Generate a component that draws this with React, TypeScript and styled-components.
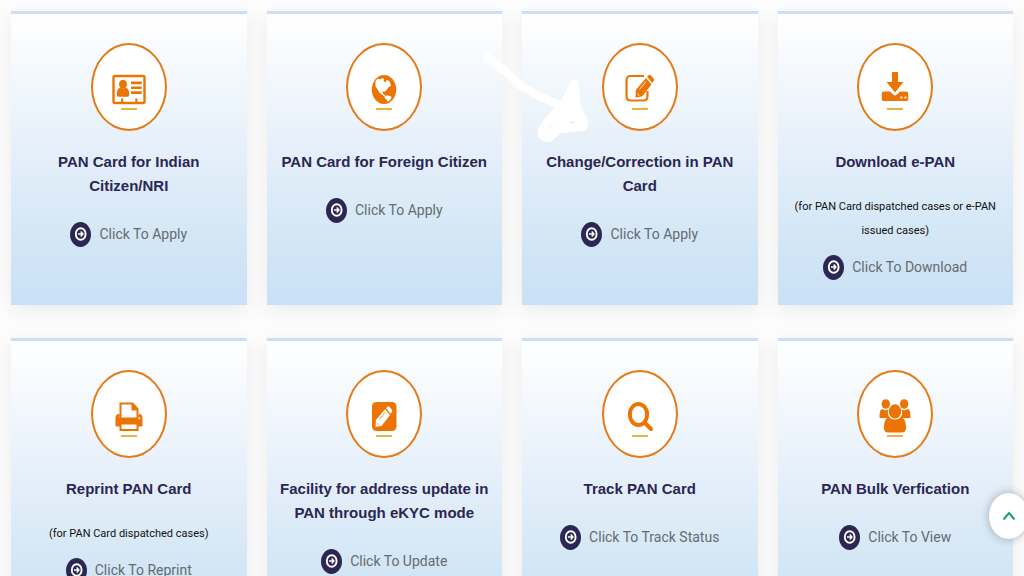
import React from "react";
import styled, { createGlobalStyle } from "styled-components";

const GlobalStyle = createGlobalStyle`
  *, *::before, *::after { box-sizing: border-box; }
  body {
    margin: 0;
    background: #fdfdfd;
    font-family: Roboto, "Liberation Sans", sans-serif;
  }
`;

const Services = styled.main`
  display: grid;
  grid-template-columns: repeat(4, minmax(0, 1fr));
  gap: 33px 20px;
  padding: 11px 11px 33px;
`;

const Card = styled.article`
  position: relative;
  display: flex;
  flex-direction: column;
  align-items: center;
  min-height: 294px;
  padding: 29px 10px 25px;
  border-top: 3px solid #cce0f4;
  background: linear-gradient(180deg, #ffffff 0%, #e6f0fa 45%, #d3e6f5 78%, #c9e0f6 100%);
  box-shadow: 0 5px 20px rgba(0, 0, 0, 0.08);
  text-align: center;
`;

const Badge = styled.div`
  display: flex;
  align-items: center;
  justify-content: center;
  width: 76px;
  height: 88px;
  padding-top: 6px;
  border: 2px solid #e47a18;
  border-radius: 50%;
  background: #ffffff;
`;

const Title = styled.h2`
  margin: 19px 0 0;
  color: #2c2652;
  font-family: "Liberation Sans", Arial, sans-serif;
  font-size: 15px;
  font-weight: 700;
  line-height: 24px;
`;

const Note = styled.p`
  margin: 21px 0 0;
  color: #111111;
  font-size: 11px;
  line-height: 24px;
`;

const ActionLink = styled.a<{ $afterNote?: boolean }>`
  display: inline-flex;
  align-items: center;
  gap: 8px;
  margin-top: ${({ $afterNote }) => ($afterNote ? 12 : 24)}px;
  color: #666b6f;
  font-size: 14px;
  line-height: 25px;
  text-decoration: none;
`;

const ScrollTop = styled.button`
  position: fixed;
  right: -4px;
  bottom: 37px;
  display: flex;
  align-items: center;
  justify-content: center;
  width: 39px;
  height: 46px;
  padding: 0;
  border: 0;
  border-radius: 50%;
  background: #ffffff;
  box-shadow: 0 0 10px rgba(0, 0, 0, 0.3);
  cursor: pointer;
`;

const Scribble = styled.svg`
  position: absolute;
  z-index: 1;
  top: 34px;
  left: -42px;
  pointer-events: none;
`;

const ORANGE = "#ec7404";

function Glyph({ children }: { children: React.ReactNode }) {
  return (
    <svg width="40" height="48" viewBox="0 0 40 48" fill={ORANGE} aria-hidden="true">
      {children}
      <rect x="12" y="42" width="16" height="2" fill="#eeb040" />
    </svg>
  );
}

const IdCardGlyph = () => (
  <Glyph>
    <rect x="4.500" y="10" width="31" height="27" rx="1.500" fill="none" stroke={ORANGE} strokeWidth="2.400" />
    <ellipse cx="14" cy="18.300" rx="4" ry="4.600" />
    <path d="M7.800 28.500c0-4.500 1.500-6.800 3.700-6.800 1.500 1.300 3.500 1.300 5 0 2.200 0 3.700 2.300 3.700 6.800 0 1.500-.8 2.300-1.800 2.300H9.600C8.600 30.800 7.800 30 7.800 28.500z" />
    <path d="M22 15.500h10.700v2.700H22zM22 20.400h10.700v2.700H22zM22 25.200h10.700v2.700H22zM12 32.500h2.200v4H12zM26.300 32.500h2.200v4h-2.200z" />
  </Glyph>
);

const GlobeGlyph = () => (
  <Glyph>
    <ellipse cx="20" cy="23.500" rx="12.200" ry="14.500" />
    <path
      fill="#fff"
      d="M11.500 15l2-2.300 3 .5 2-1.200 1.500 1-.5 2 2 1.500 1-2.500 2.500.8 1.500 3 .5 2-2.500 1.500-2 3-2 1.500-2-.5.500 2.500 1.500 1 1.500 2.200-2-.7-2.500-2-2-1.500-2-3.500-2-3zM20.500 30.500l2.500-1.200 4 1 .5 1.500-2 2.700-2 1.200-.7-2.200-2-1.200z"
    />
  </Glyph>
);

const PencilShape = ({ color, cut }: { color: string; cut: string }) => (
  <>
    <path fill={color} d="M14 31.500l.3-7.500L24.500 12l5.500 6.400L20.500 30.500z" />
    <path fill={color} d="M25.600 10.800l1.600-1.600c.7-.7 1.600-.6 2.300.2l2.500 3c.7.8.8 1.900.1 2.700l-1.300 1.900z" />
    <path fill="none" stroke={cut} strokeWidth=".8" d="M18 23.500l6.500-8M15.800 27.500l2 2.300" />
  </>
);

const EditGlyph = () => (
  <Glyph>
    <path
      fill="none"
      stroke={ORANGE}
      strokeWidth="2.200"
      d="M24 10H10.500C7.800 10 6.500 11.800 6.500 14.500v15.500c0 2.700 1.300 4.500 4 4.500h13c2.700 0 4-1.800 4-4.500V25"
    />
    <g transform="translate(1.500 0)">
      <PencilShape color={ORANGE} cut="#fff" />
    </g>
  </Glyph>
);

const DownloadGlyph = () => (
  <Glyph>
    <path d="M17 6h6v10h5.500L20 26.500 11.500 16H17z" />
    <path
      fillRule="evenodd"
      d="M8.500 25.500h6.500l3.300 3.300c1 1 2.400 1 3.400 0l3.300-3.300h6.500c1 0 1.700.8 1.700 1.900v5.800c0 1.100-.7 1.900-1.700 1.900h-23c-1 0-1.700-.8-1.700-1.900v-5.800c0-1.100.7-1.900 1.700-1.900zM25.500 30.500v2h1.800v-2zm4 0v2h1.800v-2z"
    />
  </Glyph>
);

const PrinterGlyph = () => (
  <Glyph>
    <path fill="#fff" stroke={ORANGE} strokeWidth="2" d="M11.500 25V10.500h12l5 5.500v9" />
    <path d="M22.500 10l7 7.500h-7z" />
    <path
      fillRule="evenodd"
      d="M9.500 21h1v3.500h19V21h1c1.700 0 3 1.500 3 3.500v8c0 .7-.4 1-1 1h-25c-.6 0-1-.3-1-1v-8c0-2 1.300-3.500 3-3.500zM29.500 24.200v2h1.700v-2z"
    />
    <path fill="#fff" stroke={ORANGE} strokeWidth="2" d="M11.500 30.500h17v6.500h-17z" />
  </Glyph>
);

const PenSquareGlyph = () => (
  <Glyph>
    <rect x="8" y="9" width="24.500" height="29" rx="4.500" />
    <g transform="translate(-1 5.500) scale(.9)">
      <PencilShape color="#fff" cut={ORANGE} />
    </g>
  </Glyph>
);

const SearchGlyph = () => (
  <Glyph>
    <ellipse cx="18.500" cy="21.500" rx="8.700" ry="10.500" fill="none" stroke={ORANGE} strokeWidth="4" />
    <path d="M25 30l6 6" fill="none" stroke={ORANGE} strokeWidth="4" strokeLinecap="round" />
  </Glyph>
);

const PeopleGlyph = () => (
  <Glyph>
    <ellipse cx="10.800" cy="11" rx="4.200" ry="4.800" />
    <ellipse cx="29.200" cy="11" rx="4.200" ry="4.800" />
    <path d="M4.500 24c0-5 .8-8 2.800-8 2 1.500 4.700 1.500 6.200.5-1.300 3-.7 6 1.500 8.500H6.500c-1.200 0-2 0-2-1zM35.500 24c0-5-.8-8-2.800-8-2 1.500-4.700 1.500-6.200.5 1.300 3 .7 6-1.500 8.500h8.500c1.200 0 2 0 2-1z" />
    <ellipse cx="20" cy="18.500" rx="6.200" ry="7.200" />
    <path d="M9 35c0-6 1.500-10.500 5.500-10.500 3.300 2.800 7.700 2.800 11 0 4 0 5.500 4.500 5.500 10.500 0 3-1.500 4.500-4 4.500H13c-2.500 0-4-1.500-4-4.500z" />
  </Glyph>
);

const ArrowDot = () => (
  <svg width="21" height="25" viewBox="0 0 21 25" aria-hidden="true">
    <ellipse cx="10.500" cy="12.500" rx="10.500" ry="12.500" fill="#2c2652" />
    <ellipse cx="10.700" cy="12" rx="4.900" ry="5.800" fill="none" stroke="#fff" strokeWidth="1.900" />
    <path d="M8 12h5M10.700 9.500l2.200 2.500-2.200 2.500" fill="none" stroke="#fff" strokeWidth="1.500" />
  </svg>
);

/* Hand-drawn white arrow pointing at the correction card. */
const HandArrow = () => (
  <Scribble width="120" height="100" viewBox="0 0 120 100" aria-hidden="true">
    <path
      d="M7 9l18 14 16 15 18 10 20 9"
      fill="none"
      stroke="#fff"
      strokeWidth="8"
      strokeLinecap="round"
      strokeLinejoin="round"
    />
    <path
      fill="#fff"
      stroke="#fff"
      strokeWidth="1"
      strokeLinejoin="round"
      d="M90 35c1-4 7-4 8 0l2 22 7 14c1 4 1 8-2 11l-25 3-9 8c-4 2-12-1-13-6 0-5 1-9 4-12l13-16 8-9z"
    />
    <path d="M68 81l5-4M90 75l3-2 2 2z" fill="#e9f2fb" stroke="#e9f2fb" strokeWidth="1" />
  </Scribble>
);

type Service = {
  title: string;
  action: string;
  glyph: React.ReactNode;
  note?: string;
  marked?: boolean;
};

const services: Service[] = [
  { title: "PAN Card for Indian Citizen/NRI", action: "Click To Apply", glyph: <IdCardGlyph /> },
  { title: "PAN Card for Foreign Citizen", action: "Click To Apply", glyph: <GlobeGlyph /> },
  { title: "Change/Correction in PAN Card", action: "Click To Apply", glyph: <EditGlyph />, marked: true },
  {
    title: "Download e-PAN",
    action: "Click To Download",
    glyph: <DownloadGlyph />,
    note: "(for PAN Card dispatched cases or e-PAN issued cases)",
  },
  {
    title: "Reprint PAN Card",
    action: "Click To Reprint",
    glyph: <PrinterGlyph />,
    note: "(for PAN Card dispatched cases)",
  },
  {
    title: "Facility for address update in PAN through eKYC mode",
    action: "Click To Update",
    glyph: <PenSquareGlyph />,
  },
  { title: "Track PAN Card", action: "Click To Track Status", glyph: <SearchGlyph /> },
  { title: "PAN Bulk Verfication", action: "Click To View", glyph: <PeopleGlyph /> },
];

export default function App() {
  return (
    <>
      <GlobalStyle />
      <Services>
        {services.map((service) => (
          <Card key={service.title}>
            <Badge>{service.glyph}</Badge>
            <Title>{service.title}</Title>
            {service.note && <Note>{service.note}</Note>}
            <ActionLink href="#" $afterNote={Boolean(service.note)}>
              <ArrowDot />
              {service.action}
            </ActionLink>
            {service.marked && <HandArrow />}
          </Card>
        ))}
      </Services>
      <ScrollTop type="button" aria-label="Back to top">
        <svg width="14" height="12" viewBox="0 0 14 12" aria-hidden="true">
          <path d="M1.500 9.500L7 3l5.500 6.500" fill="none" stroke="#1f9d74" strokeWidth="2" />
        </svg>
      </ScrollTop>
    </>
  );
}
